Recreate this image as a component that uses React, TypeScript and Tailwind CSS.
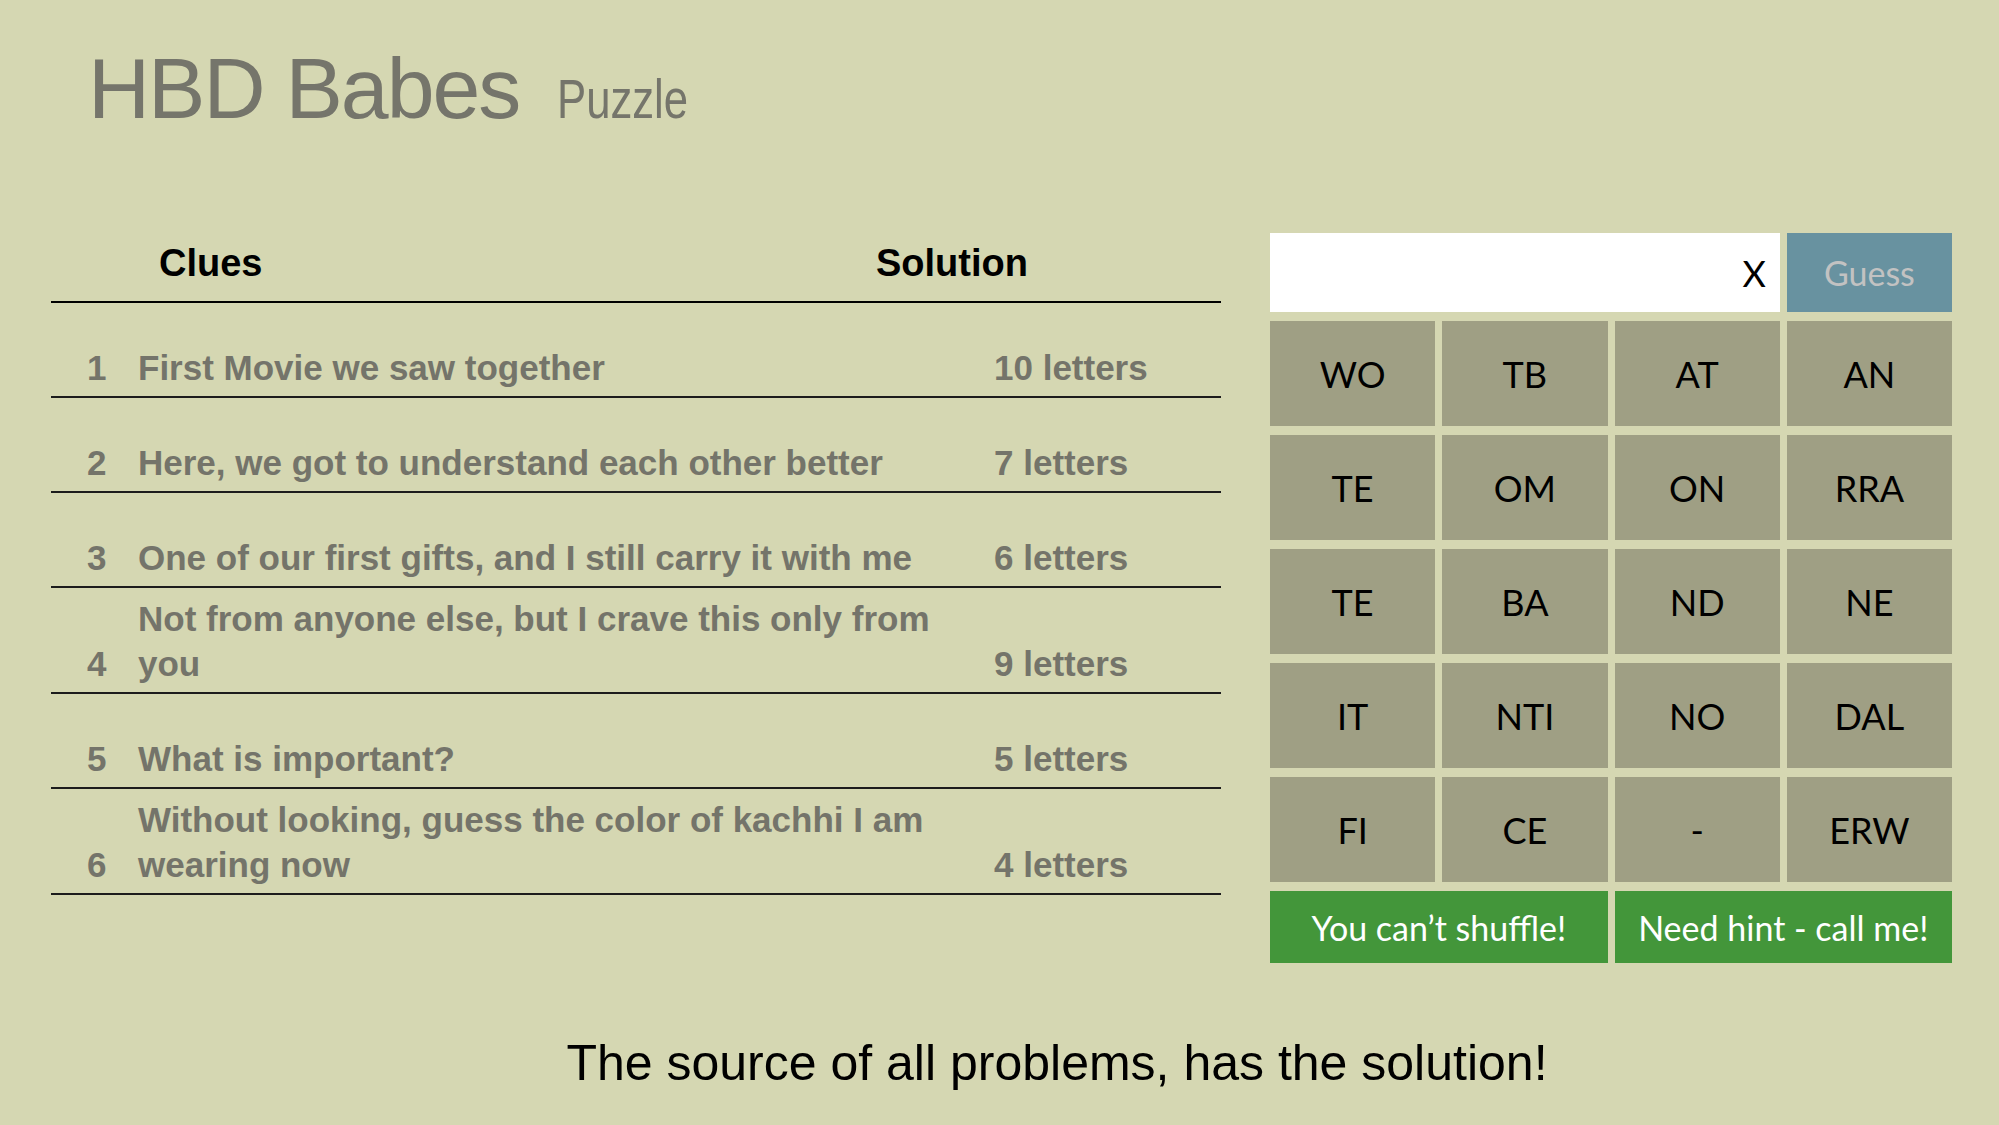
const clues = [
  { n: 1, lines: ['First Movie we saw together'], len: '10 letters' },
  { n: 2, lines: ['Here, we got to understand each other better'], len: '7 letters' },
  { n: 3, lines: ['One of our first gifts, and I still carry it with me'], len: '6 letters' },
  { n: 4, lines: ['Not from anyone else, but I crave this only from', 'you'], len: '9 letters' },
  { n: 5, lines: ['What is important?'], len: '5 letters' },
  { n: 6, lines: ['Without looking, guess the color of kachhi I am', 'wearing now'], len: '4 letters' },
]

const tiles = ['WO', 'TB', 'AT', 'AN', 'TE', 'OM', 'ON', 'RRA', 'TE', 'BA', 'ND', 'NE', 'IT', 'NTI', 'NO', 'DAL', 'FI', 'CE', '-', 'ERW']

export default function App() {
  return (
    <div className="min-h-screen w-full bg-[#d5d7b2] font-['Liberation_Sans',Arial,sans-serif]">
      <header className="flex items-baseline pl-[88px] pt-[45px]">
        <h1 className="text-[86px] leading-none tracking-[-2px] text-[#75756b]">HBD Babes</h1>
        <span className="ml-[38px] inline-block origin-left scale-x-[0.78] text-[56px] leading-none text-[#75756b]">
          Puzzle
        </span>
      </header>

      <main className="mt-[102px] flex items-start gap-[49px] pl-[51px]">
        {/* clue table */}
        <section className="w-[1170px]">
          <div className="flex border-b-2 border-black pt-[8px] pb-[16px] text-[38px] font-bold leading-[44px] text-black">
            <div className="w-[825px] pl-[108px]">Clues</div>
            <div>Solution</div>
          </div>
          {clues.map((c) => (
            <div
              key={c.n}
              className="flex min-h-[95px] items-end border-b-2 border-[#1c1c1c] pt-[8px] pb-[6px] pl-[36px] text-[35px] font-bold leading-[45px] text-[#74746a]"
            >
              <div className="w-[51px]">{c.n}</div>
              <div className="w-[856px]">
                {c.lines.map((l, i) => (
                  <div key={i}>{l}</div>
                ))}
              </div>
              <div>{c.len}</div>
            </div>
          ))}
        </section>

        {/* letter board */}
        <section className="grid w-[682px] grid-cols-4 gap-x-[7px] gap-y-[9px] font-['Lato',sans-serif]">
          <div className="col-span-3 flex h-[79px] items-center justify-end bg-white pr-[14px] text-[36px] text-black">
            X
          </div>
          <button className="flex h-[79px] items-center justify-center bg-[#6892a0] text-[34px] text-[#c2c2c2]">
            Guess
          </button>
          {tiles.map((t, i) => (
            <div key={i} className="flex h-[105px] items-center justify-center bg-[#9f9f84] text-[36px] text-black">
              {t}
            </div>
          ))}
          <button className="col-span-2 flex h-[72px] items-center justify-center bg-[#43963a] text-[34px] text-white">
            You can’t shuffle!
          </button>
          <button className="col-span-2 flex h-[72px] items-center justify-center bg-[#43963a] text-[34px] text-white">
            Need hint - call me!
          </button>
        </section>
      </main>

      <p className="mt-[75px] pl-[115px] text-center text-[50px] leading-none text-black">
        The source of all problems, has the solution!
      </p>
    </div>
  )
}
